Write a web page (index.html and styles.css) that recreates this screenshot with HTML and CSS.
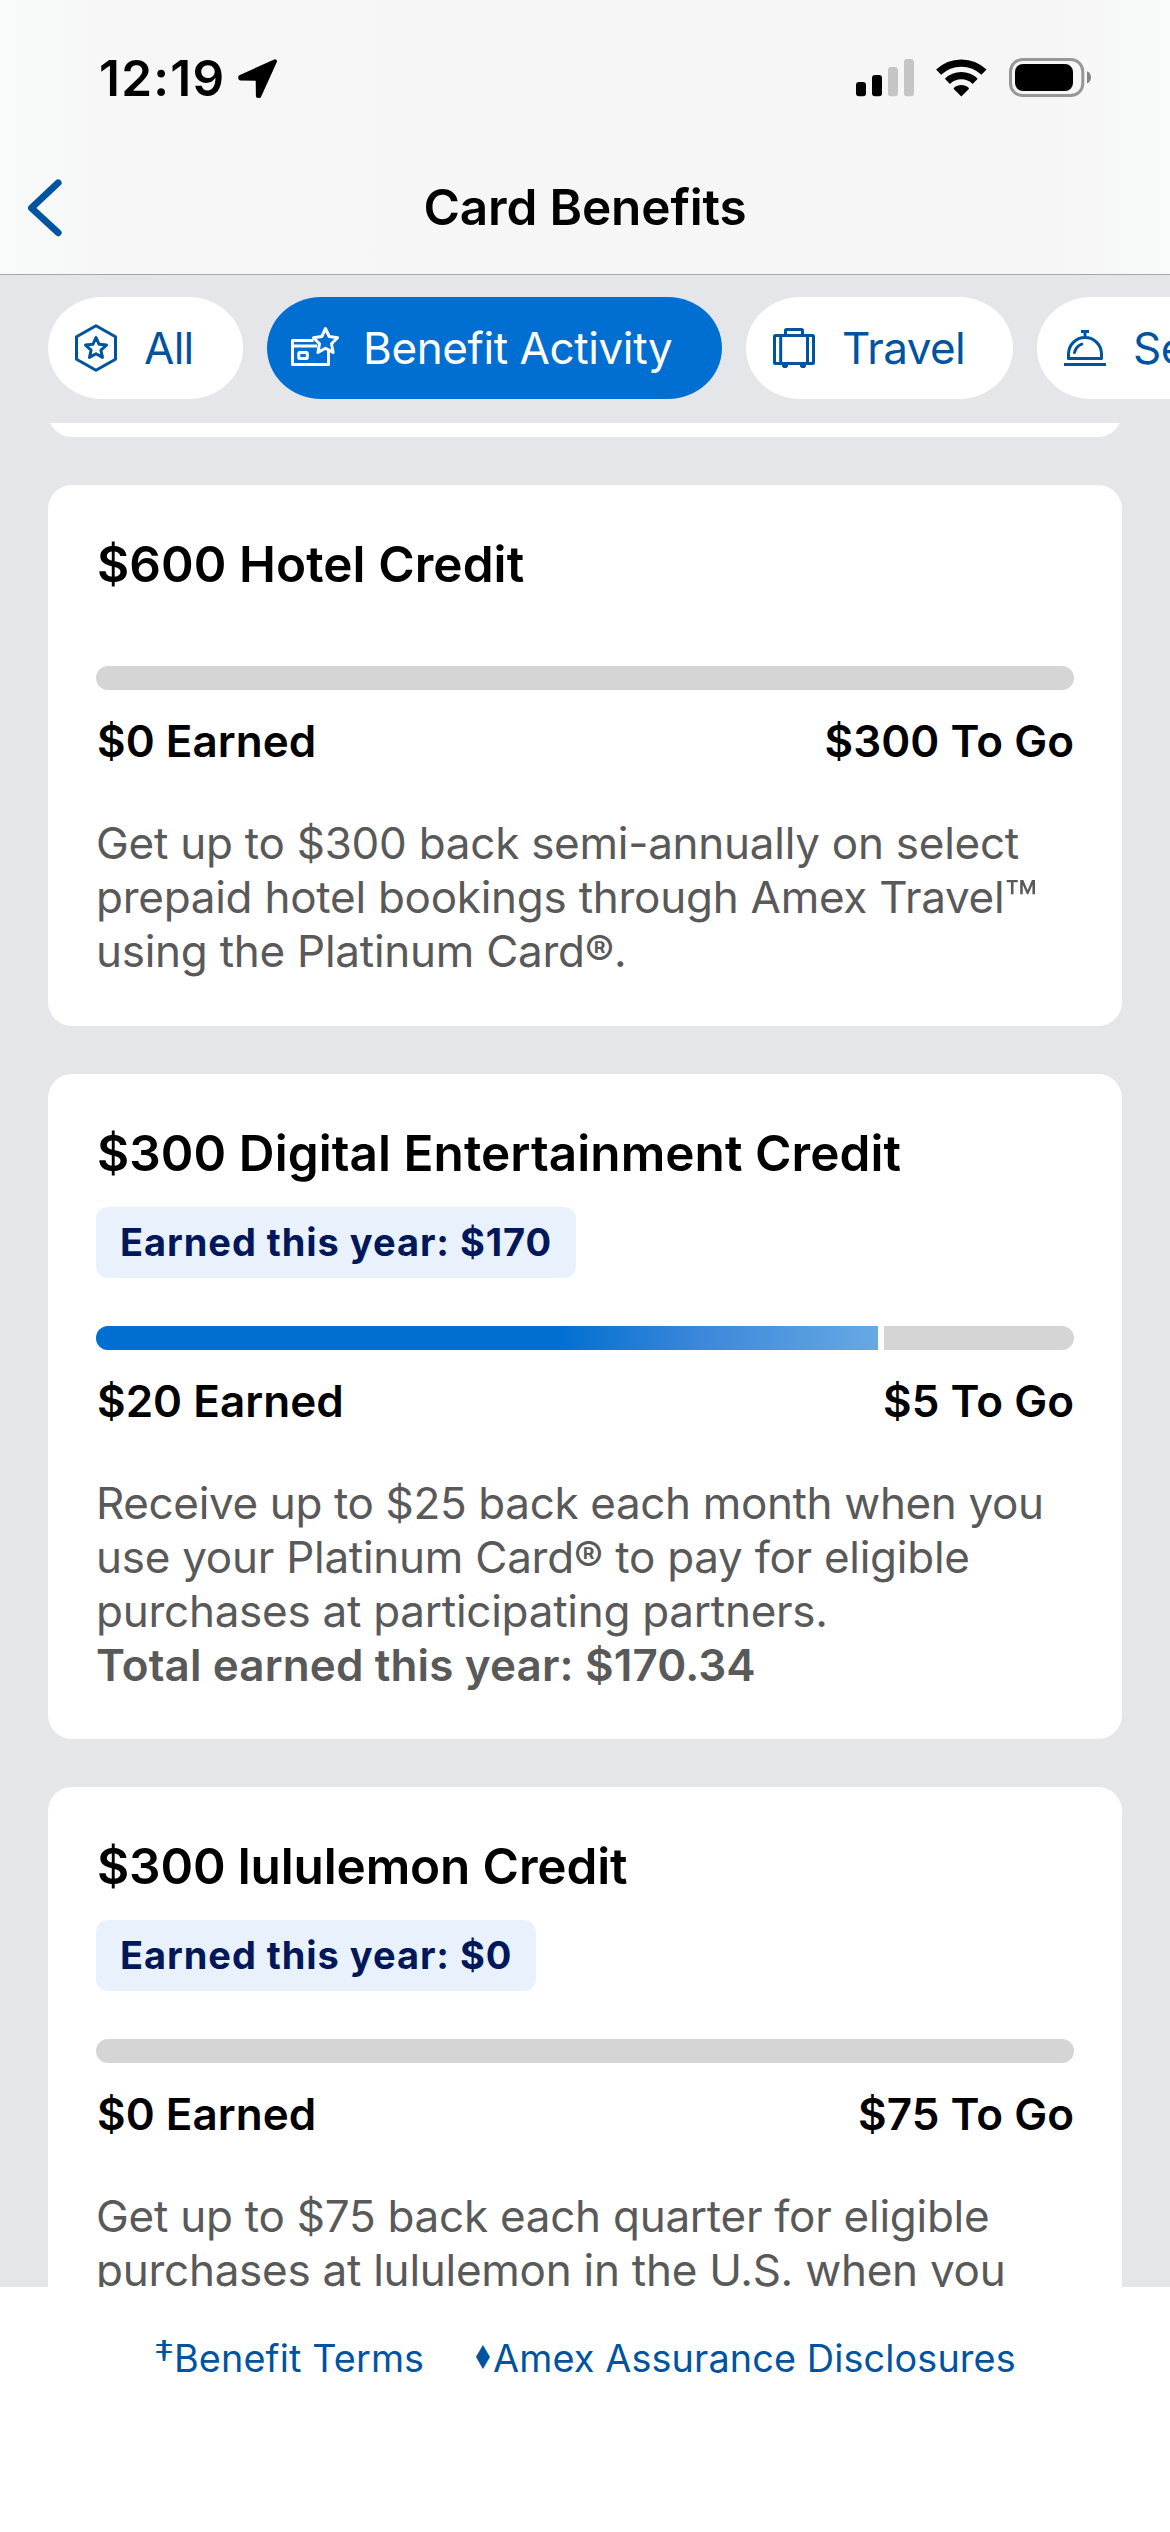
FILE: index.html
```html
<!DOCTYPE html>
<html lang="en">
<head>
<meta charset="utf-8">
<title>Card Benefits</title>
<link rel="stylesheet" href="styles.css">
</head>
<body>
<div class="app">
  <header class="header">
    <div class="status">
      <span class="status-time">12:19</span>
      <svg class="status-location" width="40" height="41" viewBox="0 0 40 41"><path d="M37 3.2 2.2 19 2.4 20.6 19.7 20.7 19.9 38 21.3 38Z" fill="#000" stroke="#000" stroke-width="4" stroke-linejoin="round"/></svg>
      <div class="status-icons">
        <svg width="58" height="41" viewBox="0 0 58 41">
          <rect x="0" y="24" width="10" height="14.3" rx="3"/>
          <rect x="16" y="17" width="10" height="21.3" rx="3"/>
          <rect x="32" y="9" width="10" height="29.3" rx="3" fill="#c5c5c5"/>
          <rect x="48" y="1" width="10" height="37.3" rx="3" fill="#c5c5c5"/>
        </svg>
        <svg width="51" height="41" viewBox="0 0 51 41">
          <path d="M2.6 14.2A32.7 32.7 0 0 1 48 14.2M11.4 23.3A20 20 0 0 1 39.2 23.3" fill="none" stroke="#000" stroke-width="7.3"/>
          <path d="M25.3 38.6 17.8 31C17.6 30.4 17.7 30 18 29.7 22 26 28.6 26 32.6 29.7 32.9 30 33 30.4 32.8 31Z"/>
        </svg>
        <svg width="82" height="41" viewBox="0 0 82 41">
          <rect x="1.5" y="1.5" width="72.3" height="36" rx="12" fill="none" stroke="#979797" stroke-width="3"/>
          <rect x="6" y="6" width="58" height="27" rx="8"/>
          <path d="M78 13.3C80.7 14.4 82 16.8 82 19.4 82 22 80.7 24.4 78 25.5Z" fill="#858585"/>
        </svg>
      </div>
    </div>
    <div class="navbar">
      <svg class="back" width="40" height="60" viewBox="0 0 40 60"><path d="M33.2 4.8 6.4 30 33.2 54.8" fill="none" stroke="#00549f" stroke-width="6.8" stroke-linecap="round" stroke-linejoin="round"/></svg>
      <h1 class="navbar-title">Card Benefits</h1>
    </div>
  </header>

  <nav class="chips">
    <div class="chip chip-all">
      <svg class="chip-icon" viewBox="0 0 48 48"><path d="M24 1.8 43.5 12.8V35.2L24 46.2 4.5 35.2V12.8Z"/><path d="M24 13.5 27.1 20.3 34.5 21.1 28.9 26.1 30.5 33.4 24 29.7 17.5 33.4 19.1 26.1 13.5 21.1 20.9 20.3Z"/></svg>
      <span>All</span>
    </div>
    <div class="chip chip-activity chip-active">
      <svg class="chip-icon" viewBox="0 0 48 48"><path d="M22.5 16.5H1.5V40.5H37.5V27M1.5 22H26"/><rect x="7.8" y="28.5" width="8.5" height="6" rx="1"/><path d="M34.5 4.5 38.2 12.5 46.5 13.7 40.5 19.7 42.1 28.4 34.5 24.3 26.9 28.4 28.5 19.7 22.5 13.7 30.8 12.5Z"/></svg>
      <span>Benefit Activity</span>
    </div>
    <div class="chip chip-travel">
      <svg class="chip-icon" viewBox="0 0 48 48"><rect x="4.5" y="11.5" width="39" height="28" rx="1"/><path d="M10.7 11.5V39.5M37.5 11.5V39.5M15.5 11.5V6.5Q15.5 5.5 16.5 5.5H31.5Q32.5 5.5 32.5 6.5V11.5"/><path class="solid" d="M12 40H18V42.5L16.5 44H13.5L12 42.5ZM30 40H36V42.5L34.5 44H31.5L30 42.5Z"/></svg>
      <span>Travel</span>
    </div>
    <div class="chip chip-services">
      <svg class="chip-icon" viewBox="0 0 48 48"><path d="M3 40.5H45M7.5 34.5V30A16.5 16.5 0 0 1 40.5 30V34.5ZM20 7.5H28M24 7.5V13.5"/><path stroke-linecap="round" d="M13.5 28.5C14.5 24.5 17 21.5 20.8 20.2"/></svg>
      <span>Services</span>
    </div>
  </nav>

  <main class="list">
    <section class="card card-previous"></section>

    <section class="card">
      <h2 class="card-title">$600 Hotel Credit</h2>
      <div class="bar bar-plain"></div>
      <div class="amounts"><span>$0 Earned</span><span>$300 To Go</span></div>
      <p class="desc">Get up to $300 back semi-annually on select<br>prepaid hotel bookings through Amex Travel<span class="tm">™</span><br>using the Platinum Card®.</p>
    </section>

    <section class="card card-total">
      <h2 class="card-title">$300 Digital Entertainment Credit</h2>
      <div class="badge">Earned this year: $170</div>
      <div class="bar"><div class="bar-fill" style="width:80%"></div></div>
      <div class="amounts"><span>$20 Earned</span><span>$5 To Go</span></div>
      <p class="desc"><span class="narrow">Receive up to $25 back each month when you</span><br>use your Platinum Card® to pay for eligible<br>purchases at participating partners.<br><strong>Total earned this year: $170.34</strong></p>
    </section>

    <section class="card">
      <h2 class="card-title card-title-tight">$300 lululemon Credit</h2>
      <div class="badge">Earned this year: $0</div>
      <div class="bar"></div>
      <div class="amounts"><span>$0 Earned</span><span>$75 To Go</span></div>
      <p class="desc">Get up to $75 back each quarter for eligible<br>purchases at lululemon in the U.S. when you</p>
    </section>
  </main>

  <footer class="footer">
    <a class="link link-terms"><span class="mark mark-dagger">‡</span>Benefit Terms</a>
    <a class="link"><span class="mark mark-diamond">♦</span>Amex Assurance Disclosures</a>
  </footer>
</div>
</body>
</html>
```
FILE: styles.css
```css
* { box-sizing: border-box; }

body {
  margin: 0;
  font-family: Inter, "Liberation Sans", sans-serif;
  color: #000;
}

h1, h2, p { margin: 0; }
svg { display: block; flex: none; }

.app {
  display: flex;
  flex-direction: column;
  width: 1170px;
  height: 2532px;
  overflow: hidden;
  background: #e5e6ea;
}

/* Status bar and title */
.header {
  flex: none;
  height: 275px;
  border-bottom: 1px solid #a5a7a8;
  background: linear-gradient(90deg, #f9fafa 0, #f7f7f7 10%, #f6f6f6 50%, #f6f6f6 90%, #f9fafa 100%);
}

.status {
  display: flex;
  align-items: center;
  height: 142px;
  padding: 15px 79px 0 99px;
}

.status-time {
  width: 139px;
  padding-bottom: 2px;
  font-size: 49.5px;
  font-weight: 600;
  line-height: 60px;
  letter-spacing: 1.25px;
  white-space: nowrap;
}

.status-icons {
  display: flex;
  gap: 22px;
  margin-left: auto;
}

.navbar {
  display: grid;
  grid-template-columns: 200px 1fr 200px;
  align-items: center;
  height: 132px;
}

.back { margin: 0 0 1px 25px; }

.navbar-title {
  padding-bottom: 2px;
  font-size: 49.5px;
  font-weight: 600;
  line-height: 60px;
  letter-spacing: -0.15px;
  text-align: center;
}

/* Category filters */
.chips {
  display: flex;
  flex: none;
  gap: 24px;
  height: 148px;
  padding: 22px 0 24px 48px;
  overflow: hidden;
}

.chip {
  display: flex;
  flex: none;
  align-items: center;
  gap: 24px;
  height: 102px;
  padding-left: 24px;
  border-radius: 54px / 51px;
  background: #fff;
  color: #00549f;
  font-size: 44px;
  letter-spacing: -0.4px;
  white-space: nowrap;
}

.chip-all { width: 195px; letter-spacing: -0.7px; }
.chip-activity { width: 455px; }
.chip-travel { width: 267px; letter-spacing: -0.6px; }
.chip-services { width: 310px; }

.chip-active {
  background: #006fd1;
  color: #fff;
}

.chip-icon {
  width: 48px;
  height: 48px;
  fill: none;
  stroke: currentColor;
  stroke-width: 3;
  stroke-linejoin: round;
}

.chip-icon .solid {
  fill: currentColor;
  stroke: none;
}

/* Benefit cards */
.list {
  display: flex;
  flex: 1;
  flex-direction: column;
  gap: 48px;
  min-height: 0;
  padding: 0 48px;
  overflow: hidden;
}

.card {
  flex: none;
  padding: 48px;
  border-radius: 24px;
  background: #fff;
}

.card-previous {
  height: 96px;
  margin-top: -82px;
}

.card-total { padding-bottom: 47px; }

.card-title {
  padding-left: 1px;
  font-size: 49.5px;
  font-weight: 600;
  line-height: 62px;
  letter-spacing: 0.07px;
  white-space: nowrap;
}

.card-title-tight { letter-spacing: -0.14px; }

.badge {
  width: fit-content;
  height: 71px;
  margin-top: 23px;
  padding: 0 24px;
  border-radius: 12px;
  background: #e9f2fc;
  color: #00175a;
  font-size: 38px;
  font-weight: 700;
  line-height: 70px;
  letter-spacing: 0.95px;
}

.bar {
  height: 24px;
  margin-top: 48px;
  border-radius: 12px;
  background: #d5d5d5;
  overflow: hidden;
}

.bar-plain { margin-top: 71px; }

.bar-fill {
  box-sizing: content-box;
  height: 24px;
  border-right: 6px solid #fff;
  background: linear-gradient(90deg, #006fd1 0, #006fd1 59%, #3b87da 77%, #66a9e4 100%);
}

.amounts {
  display: flex;
  justify-content: space-between;
  margin-top: 24px;
  padding-left: 1px;
  font-size: 44px;
  font-weight: 600;
  line-height: 54px;
  letter-spacing: 0.04px;
}

.desc {
  margin-top: 48px;
  color: #595959;
  font-size: 44px;
  line-height: 54px;
  letter-spacing: -0.26px;
  white-space: nowrap;
}

.desc .narrow { letter-spacing: -0.365px; }

.desc .tm {
  font-size: 54px;
  line-height: 0;
  vertical-align: -6px;
}

.desc strong {
  font-weight: 600;
  letter-spacing: 0.13px;
}

/* Footer links */
.footer {
  display: flex;
  flex: none;
  gap: 48px;
  height: 245px;
  padding: 47px 0 0 154px;
  background: #fff;
}

.link {
  display: flex;
  height: 48px;
  color: #00549f;
  font-size: 37.8px;
  line-height: 48px;
  letter-spacing: 0.12px;
  white-space: nowrap;
}

.link-terms { width: 273px; }

.mark {
  display: flex;
  flex: none;
  justify-content: center;
  width: 20px;
}

.mark-dagger {
  font-size: 28px;
  transform: translateY(-7px) scaleX(1.45);
}

.mark-diamond {
  width: 18px;
  font-family: "DejaVu Sans", sans-serif;
  font-size: 33px;
  transform: translateX(-1px) scaleX(0.75);
}
```
